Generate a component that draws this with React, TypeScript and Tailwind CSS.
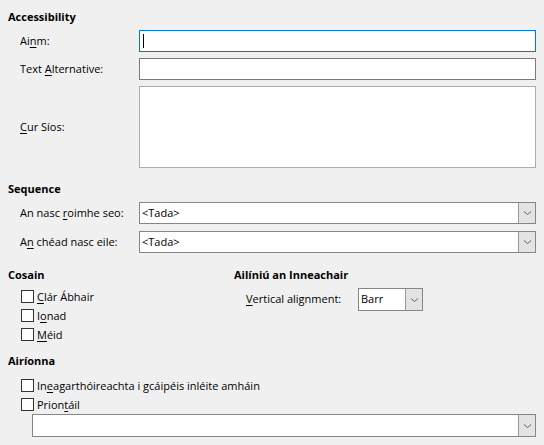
import type { ReactNode } from 'react';

const FONT = { fontFamily: '"Open Sans", "Noto Sans", sans-serif' };

function U({ children }: { children: ReactNode }) {
  return <span className="underline underline-offset-2">{children}</span>;
}

function Heading({ children, className = '' }: { children: ReactNode; className?: string }) {
  return <div className={`h-[16px] leading-[16px] font-bold ${className}`}>{children}</div>;
}

function Chevron() {
  return (
    <svg width="9" height="6" viewBox="0 0 9 6" className="text-[#606060]">
      <path d="M1 1.5 L4.5 4.5 L8 1.5" fill="none" stroke="currentColor" strokeWidth="1" />
    </svg>
  );
}

function Select({ value, className = '' }: { value?: string; className?: string }) {
  return (
    <div className={`flex h-[22px] border border-[#868686] bg-white ${className}`}>
      <div className="flex-1 pl-[2px] leading-[20px] truncate">{value}</div>
      <div className="w-[17px] bg-[#e3e3e3] border-l border-[#9a9a9a] flex items-center justify-center">
        <Chevron />
      </div>
    </div>
  );
}

function Check({ children }: { children: ReactNode }) {
  return (
    <div className="h-[19px] flex items-center pl-[13px]">
      <div className="w-[13px] h-[13px] border border-[#333] bg-white" />
      <span className="ml-[3px] leading-[19px]">{children}</span>
    </div>
  );
}

export default function App() {
  return (
    <div
      className="w-[544px] h-[445px] bg-[#f0f0f0] text-black text-[11px] px-[8px] pt-[9px] overflow-hidden"
      style={FONT}
    >
      <Heading>Accessibility</Heading>

      <div className="mt-[5px] flex flex-col gap-[6px] pl-[12px]">
        <div className="flex items-center">
          <div className="w-[119px]">
            Ai<U>n</U>m:
          </div>
          <div className="flex-1 h-[22px] border border-[#0078d7] bg-white flex items-center pl-[3px]">
            <div className="w-px h-[14px] bg-black" />
          </div>
        </div>
        <div className="flex items-center">
          <div className="w-[119px]">
            Text <U>A</U>lternative:
          </div>
          <div className="flex-1 h-[22px] border border-[#7a7a7a] bg-white" />
        </div>
        <div className="flex items-center">
          <div className="w-[119px]">
            <U>C</U>ur Síos:
          </div>
          <div className="flex-1 h-[82px] border border-[#acacac] bg-white" />
        </div>
      </div>

      <Heading className="mt-[13px]">Sequence</Heading>
      <div className="mt-[5px] flex flex-col gap-[7px] pl-[12px]">
        <div className="flex items-center">
          <div className="w-[119px]">
            An nasc <U>r</U>oimhe seo:
          </div>
          <Select value="<Tada>" className="flex-1" />
        </div>
        <div className="flex items-center">
          <div className="w-[119px]">
            A<U>n</U> chéad nasc eile:
          </div>
          <Select value="<Tada>" className="flex-1" />
        </div>
      </div>

      <div className="mt-[14px] flex">
        <div className="w-[226px]">
          <Heading>Cosain</Heading>
          <div className="mt-[4px]">
            <Check>
              <U>C</U>lár Ábhair
            </Check>
            <Check>
              I<U>o</U>nad
            </Check>
            <Check>
              <U>M</U>éid
            </Check>
          </div>
        </div>
        <div className="flex-1">
          <Heading>Ailíniú an Inneachair</Heading>
          <div className="mt-[5px] flex items-center pl-[12px]">
            <div className="w-[112px]">
              <U>V</U>ertical alignment:
            </div>
            <Select value="Barr" className="w-[65px] h-[23px]" />
          </div>
        </div>
      </div>

      <Heading className="mt-[9px]">Airíonna</Heading>
      <div className="mt-[7px]">
        <Check>
          In<U>e</U>agarthóireachta i gcáipéis inléite amháin
        </Check>
        <Check>
          Prion<U>t</U>áil
        </Check>
      </div>
      <div className="pl-[24px]">
        <Select className="h-[23px]" />
      </div>
    </div>
  );
}
